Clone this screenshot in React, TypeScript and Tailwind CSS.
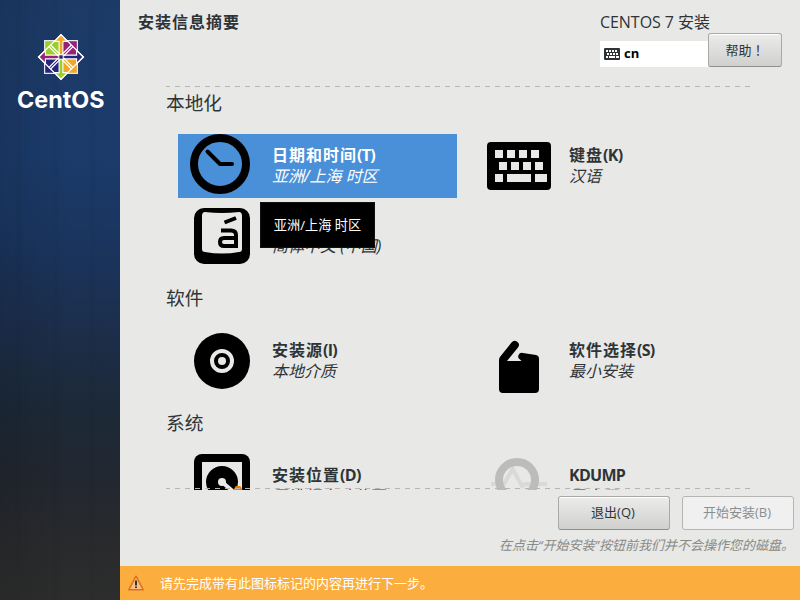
import type { ReactNode } from 'react';

interface SpokeProps {
  icon: ReactNode;
  title: string;
  /** Mnemonic or latin part of the title, set tighter than the CJK label. */
  hotkey?: string;
  status: string;
  selected?: boolean;
  warning?: boolean;
}

function CentosMark() {
  return (
    <svg className="h-[48px] w-[48px]" viewBox="-24 -24 48 48">
      <g stroke="#e4e8ee" strokeWidth="1.2">
        <path d="M-16.4-16.4H-.5V-.5H-16.4Z" fill="#9ccd2a" />
        <path d="M.5-16.4H16.4V-.5H.5Z" fill="#932279" />
        <path d="M-16.4.5H-.5V16.4H-16.4Z" fill="#262577" />
        <path d="M.5.5H16.4V16.4H.5Z" fill="#efa724" />
      </g>
      <g stroke="#fff" strokeWidth="1.1">
        <path d="M0-22.4 6.4-15.6H1.9V-2H-1.9V-15.6H-6.4Z" fill="#efa724" />
        <path d="M22.4 0 15.6 6.4V1.9H2V-1.9H15.6V-6.4Z" fill="#262577" />
        <path d="M0 22.4-6.4 15.6H-1.9V2H1.9V15.6H6.4Z" fill="#9ccd2a" />
        <path d="M-22.4 0-15.6-6.4V-1.9H-2V1.9H-15.6V6.4Z" fill="#932279" />
      </g>
      <g fill="none" stroke="#fff" strokeWidth="1.3">
        <path d="M0-22.4 22.4 0 0 22.4-22.4 0Z" />
        <path d="M-12-10.4-2.6-1M-10.4-12-1-2.6M12-10.4 2.6-1M10.4-12 1-2.6M-12 10.4-2.6 1M-10.4 12-1 2.6M12 10.4 2.6 1M10.4 12 1 2.6" />
      </g>
      <path d="M-2-2H2V2H-2Z" fill="#262577" stroke="#fff" strokeWidth=".6" />
    </svg>
  );
}

function ClockIcon() {
  return (
    <svg className="h-16 w-16" viewBox="0 0 64 64" fill="none" stroke="#000">
      <circle cx="30" cy="30" r="26" strokeWidth="8" />
      <path d="M17.5 17.5 30 30H42" strokeWidth="4" strokeLinecap="round" strokeLinejoin="round" />
    </svg>
  );
}

function KeyboardIcon() {
  return (
    <svg className="h-16 w-16" viewBox="0 0 64 64">
      <rect y="8" width="64" height="48" rx="4" />
      <path
        fill="#e8e8e6"
        d="M8 16h8v8H8zM20 16h8v8h-8zM32 16h8v8h-8zM44 16h8v8h-8zM12 28h8v8h-8zM24 28h8v8h-8zM36 28h8v8h-8zM48 28h8v8h-8zM8 40h8v8H8zM20 40h24v8H20zM48 40h12v8H48z"
      />
    </svg>
  );
}

function LanguageIcon() {
  return (
    <svg className="h-16 w-16" viewBox="0 0 64 64">
      <rect x="4" y="4" width="56" height="56" rx="10" />
      <path d="M15 8Q32 10 49 8Q52 8 52 12V45Q52 48 49 48Q32 51 15 48Q12 48 12 45V12Q12 8 15 8Z" fill="#e8e8e6" />
      <g fill="none" stroke="#000" strokeWidth="4">
        <path d="M31 26.5H41Q46 26.5 46 31V42H34Q30 42 30 38Q30 34 34 34H46" />
        <path d="M34.5 18.5 46 14" />
      </g>
    </svg>
  );
}

function DiscIcon() {
  return (
    <svg className="h-16 w-16" viewBox="0 0 64 64">
      <circle cx="32" cy="32" r="28" />
      <circle cx="32" cy="32" r="10" fill="none" stroke="#e8e8e6" strokeWidth="4" />
      <circle cx="32" cy="32" r="4" fill="#e8e8e6" />
    </svg>
  );
}

function PackageIcon() {
  return (
    <svg className="h-16 w-16" viewBox="0 0 64 64">
      <path d="M12 31Q12 29 13.5 27.3L24.5 13.5A4 4 0 0 1 31 18.5L20 32H34.5L33 30.5A3.6 3.6 0 0 1 36 24L49 26Q52 26.6 52 30V60Q52 64 48 64H16Q12 64 12 60Z" />
    </svg>
  );
}

function DriveIcon() {
  return (
    <svg className="h-16 w-16" viewBox="0 0 64 64">
      <rect x="4" width="56" height="64" rx="8" />
      <rect x="12" y="8" width="40" height="48" fill="#e8e8e6" />
      <circle cx="32" cy="28" r="16" />
      <path d="M32 28 46 40" stroke="#e8e8e6" strokeWidth="4" />
      <circle cx="32" cy="28" r="4" fill="#e8e8e6" />
      <path d="M46.5 33.5H49.5L62 58H34Z" fill="#f57900" stroke="#f57900" strokeWidth="3" strokeLinejoin="round" />
    </svg>
  );
}

function KdumpIcon() {
  return (
    <svg className="h-16 w-16" viewBox="0 0 64 64" fill="none">
      <path d="M4 30H17L25.5 15 35 32 38 30H60" stroke="#d9d9d8" strokeWidth="4" />
      <circle cx="30" cy="26" r="18" stroke="#bcbcbb" strokeWidth="8" />
    </svg>
  );
}

function WarningIcon() {
  return (
    <svg className="h-4 w-4" viewBox="0 0 16 16">
      <path d="M8 1.2 15.2 14.8H.8Z" fill="#f9c08a" stroke="#e0701a" strokeWidth="1.5" strokeLinejoin="round" />
      <path d="M7 5.5H9V10.5H7ZM7 11.5H9V13H7Z" fill="#333" />
    </svg>
  );
}

function DashedLine() {
  return (
    <div className="h-px w-[584px] bg-[repeating-linear-gradient(90deg,#b6b6b4_0_4px,transparent_4px_9px,#b6b6b4_9px_10px)]" />
  );
}

function Spoke({ icon, title, hotkey, status, selected, warning }: SpokeProps) {
  return (
    <div className={`flex h-16 w-[279px] shrink-0 gap-[18px] pl-3 ${selected ? 'bg-[#4a90d9] text-white' : ''}`}>
      <div className="shrink-0">{icon}</div>
      <div className="pt-[11px] whitespace-nowrap">
        <p className="text-base leading-[21px] font-bold">
          <span className="tracking-[1px]">{title}</span>
          {hotkey && <span className="tracking-[-0.7px]">{hotkey}</span>}
        </p>
        <p className={`text-base leading-[21px] italic ${warning ? 'text-[#cc0000]' : ''}`}>{status}</p>
      </div>
    </div>
  );
}

function Section({ title, children }: { title: string; children: ReactNode }) {
  return (
    <section className="mb-[15px]">
      <h2 className="mb-4 h-[30px] text-[18.7px] leading-[30px]">{title}</h2>
      <div className="grid grid-cols-[279px_279px] gap-x-[18px] gap-y-[6px] pl-3">{children}</div>
    </section>
  );
}

function Sidebar() {
  return (
    <aside className="flex w-[120px] shrink-0 flex-col items-center bg-[linear-gradient(90deg,rgba(0,0,0,0.1),transparent_60%),repeating-linear-gradient(90deg,transparent_0_14px,rgba(0,0,0,0.03)_17px_20px,transparent_24px_37px),linear-gradient(180deg,#1c3a66_0%,#1b3b6b_25%,#1a355f_40%,#1c2e4b_55%,#1c2937_68%,#222730_80%,#292a2c_90%,#2d2d2d_100%)] pt-[33px]">
      <div className="flex pl-[2px]">
        <CentosMark />
      </div>
      <svg className="mt-1 h-[34px] w-[100px]" viewBox="0 0 100 34">
        <text
          x="7"
          y="23"
          textLength="87.5"
          lengthAdjust="spacingAndGlyphs"
          className="fill-white font-['Inter'] text-[23px] font-bold"
        >
          CentOS
        </text>
      </svg>
    </aside>
  );
}

export default function App() {
  return (
    <div className="flex h-[600px] w-[800px] overflow-hidden bg-[#e8e8e6] font-['Open_Sans','Noto_Sans_CJK_SC',sans-serif] text-[#2e3436]">
      <Sidebar />

      <main className="flex w-[680px] flex-col">
        <header className="flex h-[86px] justify-between pl-[18px]">
          <h1 className="pt-[11px] text-base leading-[22px] font-bold tracking-[1px]">安装信息摘要</h1>
          <div className="flex w-[200px] flex-col pt-[11px]">
            <p className="h-[22px] text-base leading-[22px] tracking-[-0.05px] whitespace-nowrap">CENTOS 7 安装</p>
            <div className="flex items-end">
              <div className="flex h-[26px] w-[108px] items-center gap-1 bg-white pl-1 text-[13px] font-bold text-black">
                <svg className="h-3 w-4" viewBox="0 0 16 12">
                  <rect width="16" height="12" rx="1" fill="#2e3436" />
                  <path
                    fill="#fff"
                    d="M2 2h2v2H2zM5 2h2v2H5zM8 2h2v2H8zM11 2h2v2h-2zM3 5h2v2H3zM6 5h2v2H6zM9 5h2v2H9zM12 5h2v2h-2zM2 8h2v2H2zM5 8h6v2H5zM12 8h3v2h-3z"
                  />
                </svg>
                cn
              </div>
              <button className="h-[34px] w-[74px] rounded-[3px] border border-[#a9a9a7] border-b-[#8f8f8a] bg-linear-to-b from-[#ececeb] to-[#d0d0ce] text-[13px] shadow-[inset_0_1px_#fff]">
                帮助<span className="font-['Noto_Sans_CJK_TC',sans-serif]">！</span>
              </button>
            </div>
          </div>
        </header>

        <div className="relative h-[404px] overflow-hidden pl-[46px]">
          <DashedLine />
          <div className="h-[403px] w-[584px] overflow-hidden pt-px">
            <Section title="本地化">
              <Spoke icon={<ClockIcon />} title="日期和时间" hotkey="(T)" status="亚洲/上海 时区" selected />
              <Spoke icon={<KeyboardIcon />} title="键盘" hotkey="(K)" status="汉语" />
              <Spoke icon={<LanguageIcon />} title="语言支持" hotkey="(L)" status="简体中文 (中国)" />
            </Section>
            <Section title="软件">
              <Spoke icon={<DiscIcon />} title="安装源" hotkey="(I)" status="本地介质" />
              <Spoke icon={<PackageIcon />} title="软件选择" hotkey="(S)" status="最小安装" />
            </Section>
            <Section title="系统">
              <Spoke icon={<DriveIcon />} title="安装位置" hotkey="(D)" status="已选择自动分区" warning />
              <Spoke icon={<KdumpIcon />} title="" hotkey="KDUMP" status="已启用" />
            </Section>
          </div>
          <div className="absolute bottom-[1px] left-[46px]">
            <DashedLine />
          </div>
          <div
            role="tooltip"
            className="absolute top-[116px] left-[140px] flex h-[46px] w-[115px] items-center justify-center border border-[#111] bg-black pt-px text-[13.2px] whitespace-nowrap text-white"
          >
            亚洲/上海 时区
          </div>
        </div>

        <footer className="flex h-[76px] flex-col items-end pt-[6px] pr-[6px]">
          <div className="flex gap-3">
            <button className="h-[34px] w-[112px] rounded-[3px] border border-[#a9a9a7] border-b-[#8f8f8a] bg-linear-to-b from-[#ececeb] to-[#d0d0ce] pr-[2px] text-[13px] shadow-[inset_0_1px_#fff]">
              退出(Q)
            </button>
            <button
              disabled
              className="h-[34px] w-[112px] rounded-[3px] border border-[#b5b5b3] bg-[#f0f0f0] pr-[2px] text-[13px] text-[#8b8e8f]"
            >
              开始安装(B)
            </button>
          </div>
          <p className="mt-[5px] text-[13px] leading-5 whitespace-nowrap text-[#888a85] italic">
            在点击“开始安装”按钮前我们并不会操作您的磁盘。
          </p>
        </footer>

        <div className="flex h-[34px] items-center gap-4 bg-[#fbae3e] pl-2 text-[13px] text-white">
          <WarningIcon />
          <span className="pt-px">请先完成带有此图标标记的内容再进行下一步。</span>
        </div>
      </main>
    </div>
  );
}
